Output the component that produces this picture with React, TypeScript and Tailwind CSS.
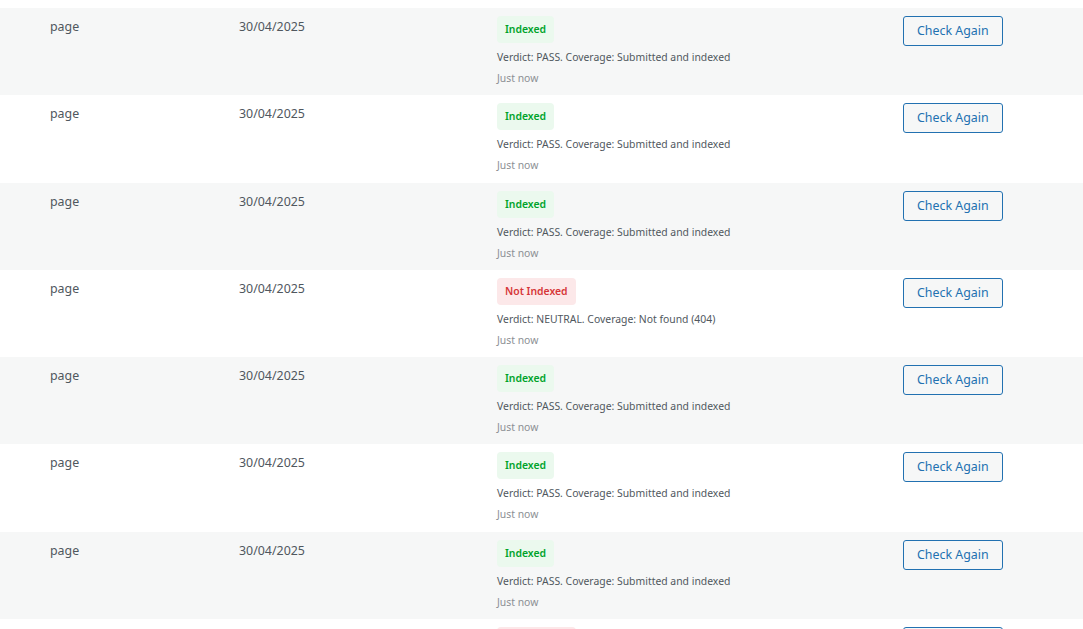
type Status = "indexed" | "not_indexed";

interface Row {
	type: string;
	date: string;
	status: Status;
	verdict: string;
	checked: string;
}

const PASS = "Verdict: PASS. Coverage: Submitted and indexed";
const NEUTRAL = "Verdict: NEUTRAL. Coverage: Not found (404)";

const rows: Row[] = [
	{ type: "page", date: "30/04/2025", status: "indexed", verdict: PASS, checked: "Just now" },
	{ type: "page", date: "30/04/2025", status: "indexed", verdict: PASS, checked: "Just now" },
	{ type: "page", date: "30/04/2025", status: "indexed", verdict: PASS, checked: "Just now" },
	{ type: "page", date: "30/04/2025", status: "not_indexed", verdict: NEUTRAL, checked: "Just now" },
	{ type: "page", date: "30/04/2025", status: "indexed", verdict: PASS, checked: "Just now" },
	{ type: "page", date: "30/04/2025", status: "indexed", verdict: PASS, checked: "Just now" },
	{ type: "page", date: "30/04/2025", status: "indexed", verdict: PASS, checked: "Just now" },
	{ type: "page", date: "30/04/2025", status: "not_indexed", verdict: NEUTRAL, checked: "Just now" },
];

function StatusBadge({ status }: { status: Status }) {
	if (status === "indexed") {
		return (
			<span className="inline-block rounded-[4px] bg-[#ebf9ee] px-2 py-[5px] text-[10.4px] leading-[17px] font-semibold text-[#00a32a]">
				Indexed
			</span>
		);
	}
	return (
		<span className="inline-block rounded-[4px] bg-[#fce8e9] px-2 py-[5px] text-[10.4px] leading-[17px] font-semibold text-[#d63638]">
			Not Indexed
		</span>
	);
}

export default function App() {
	return (
		<div className="min-h-screen overflow-hidden bg-white pt-2 font-['Noto_Sans',_sans-serif] text-[12.4px] text-[#50575e]">
			<table className="w-full table-fixed border-collapse">
				<colgroup>
					<col className="w-[40px]" />
					<col className="w-[189px]" />
					<col className="w-[258px]" />
					<col className="w-[406px]" />
					<col />
				</colgroup>
				<tbody>
					{rows.map((row, i) => (
						<tr key={i} className={i % 2 === 0 ? "bg-[#f6f7f7]" : "bg-white"}>
							<td />
							<td className="px-[10px] pt-[9px] align-top leading-[19.5px]">{row.type}</td>
							<td className="px-[10px] pt-[9px] align-top leading-[19.5px]">{row.date}</td>
							<td className="px-[10px] pt-2 pb-[8.3px] align-top">
								<StatusBadge status={row.status} />
								<div className="mt-[5px] text-[10.4px] leading-[18px] text-[#50575e]">{row.verdict}</div>
								<div className="mt-[3px] text-[10.4px] leading-[18px] text-[#8c8f94]">{row.checked}</div>
							</td>
							<td className="px-[10px] pt-2 align-top">
								<button className="h-[30px] rounded-[3px] border border-[#2271b1] bg-[#f6f7f7] px-[13px] text-[12.4px] leading-[28px] text-[#2271b1]">
									Check Again
								</button>
							</td>
						</tr>
					))}
				</tbody>
			</table>
		</div>
	);
}
